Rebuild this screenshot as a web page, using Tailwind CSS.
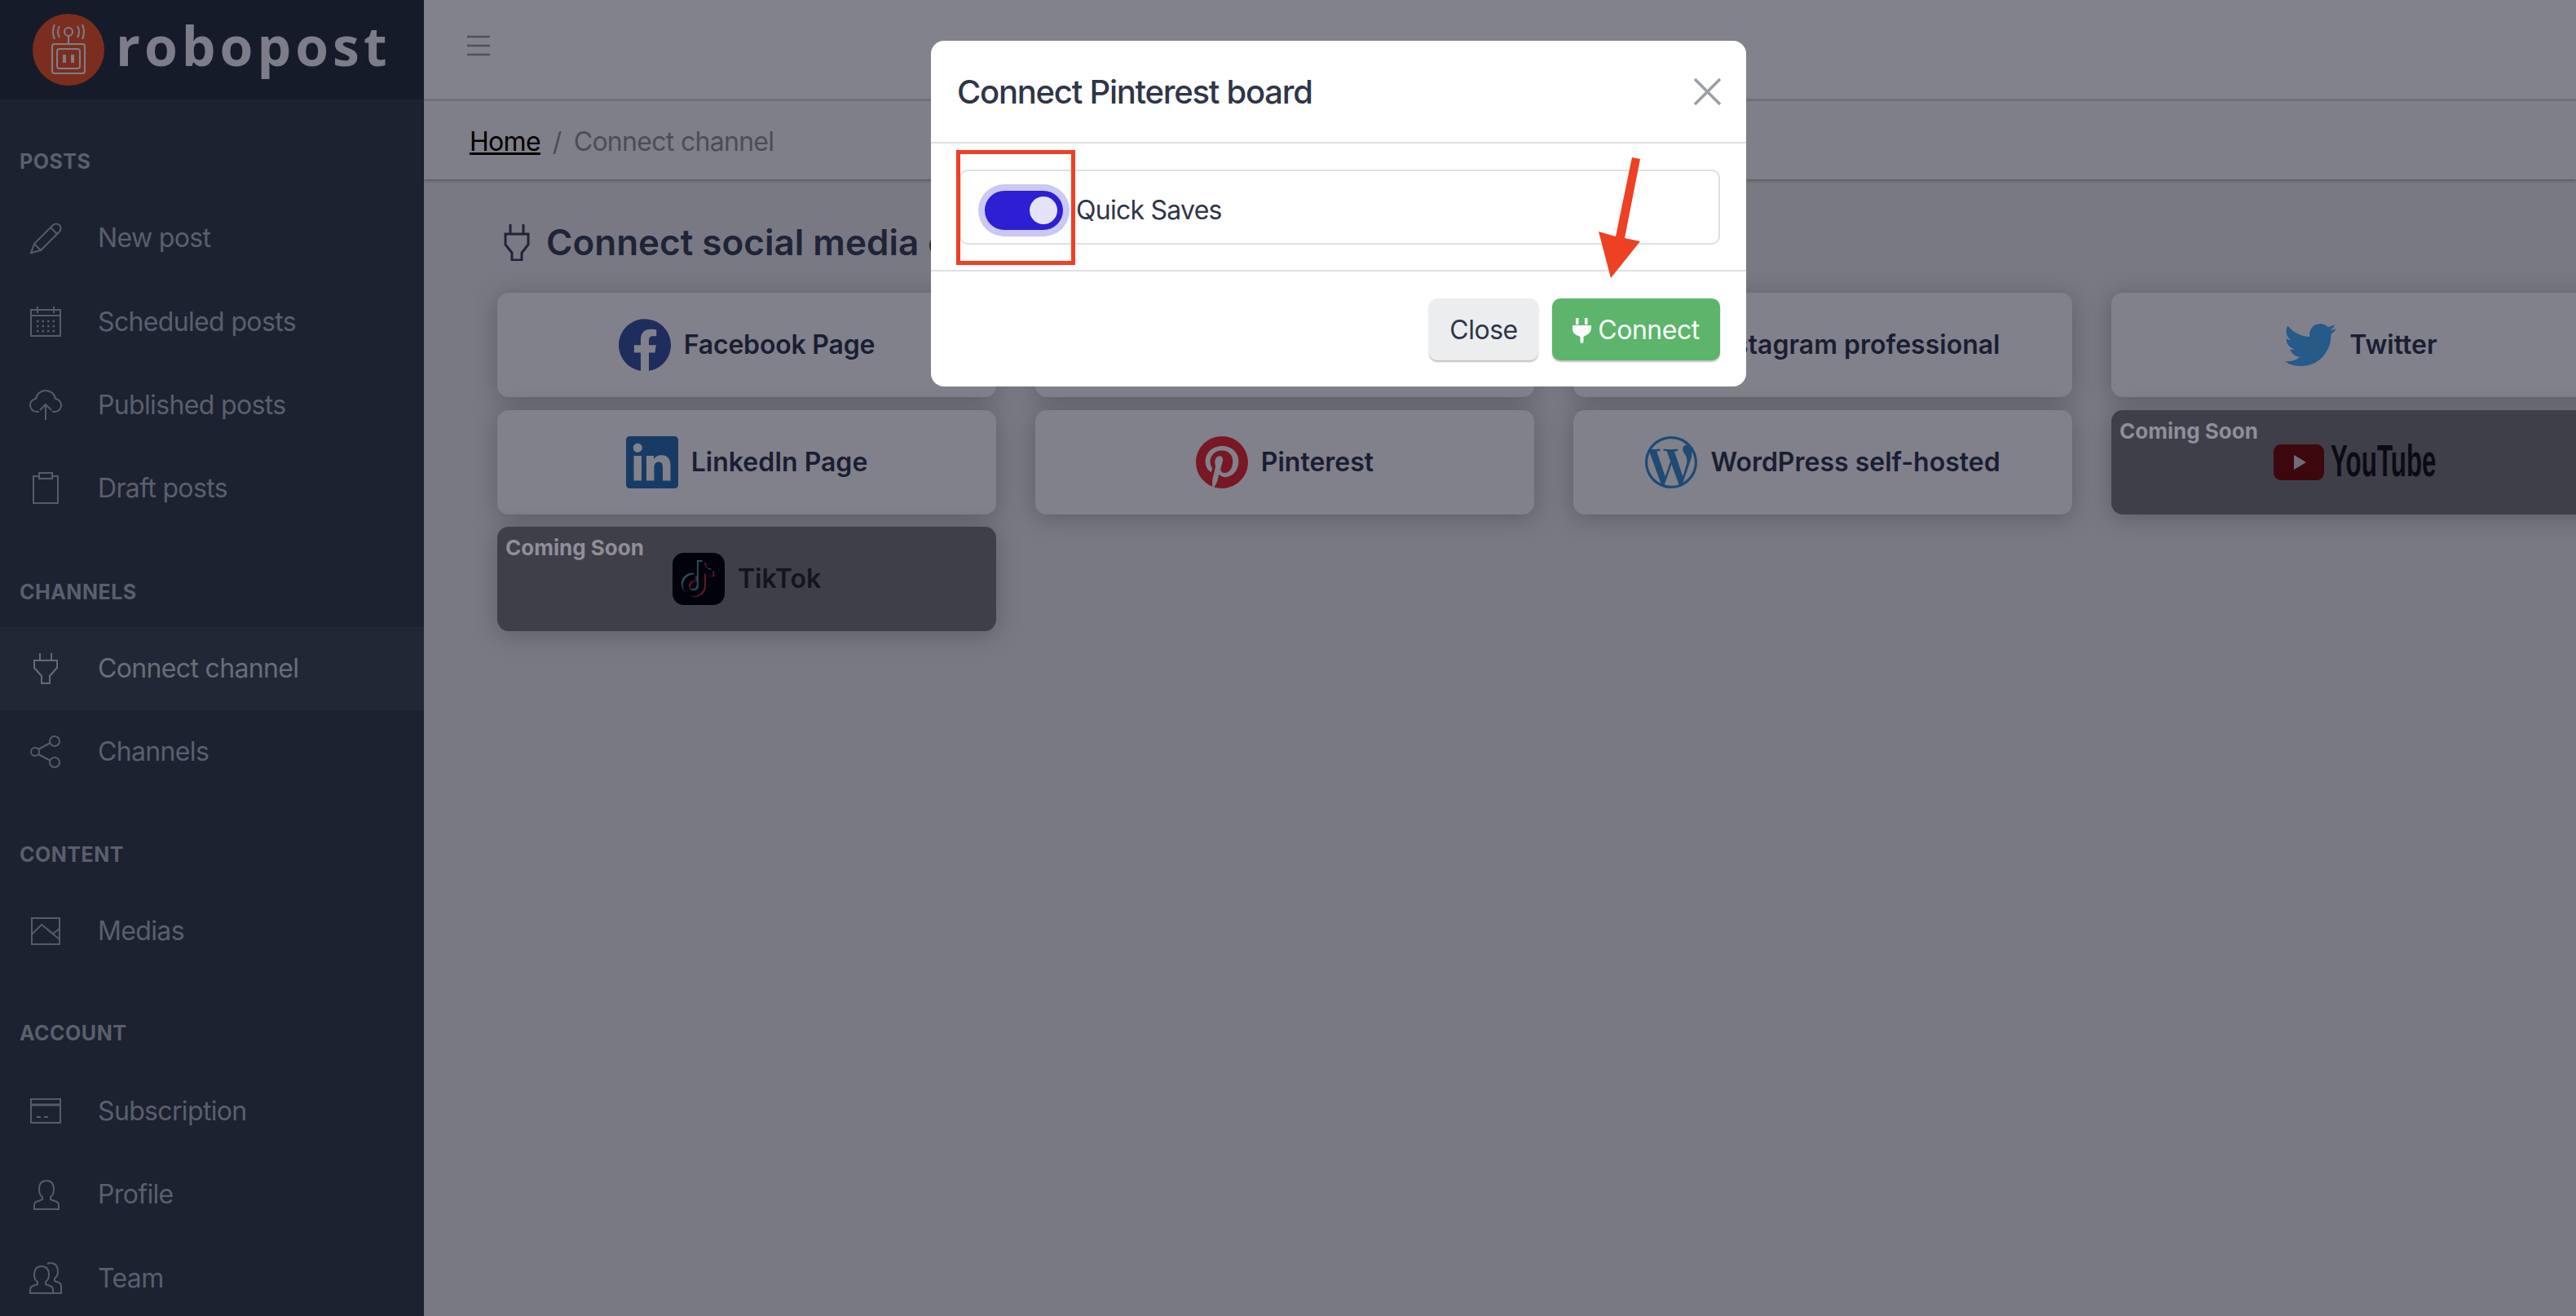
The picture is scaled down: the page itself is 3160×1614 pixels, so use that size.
<!DOCTYPE html>
<html lang="en">
<head>
<meta charset="utf-8">
<title>Connect channel</title>
<script src="https://cdn.jsdelivr.net/npm/@tailwindcss/browser@4"></script>
</head>
<body class="font-['Inter',sans-serif] w-[3160px] h-[1614px] overflow-hidden relative bg-[#797984]">
<div class="flex w-[3160px] h-[1614px] overflow-hidden">
  <!-- Sidebar -->
  <aside class="w-[520px] shrink-0 h-full bg-[#1c2230] text-[32px] tracking-[-0.65px] text-[#5b5f6c] overflow-hidden">
    <div class="h-[122px] bg-[#161b29] flex items-center pl-[40px]">
      <div class="w-[88px] h-[88px] rounded-full bg-[#7b2e1e] flex items-center justify-center">
        <svg width="44" height="64" viewBox="0 0 44 64" fill="none" stroke="#7d7e8a" stroke-width="2"><circle cx="22" cy="10" r="5"/><path d="M22 15v10M11 3q-4 7 0 14M5 1q-4 9 0 18M33 3q4 7 0 14M39 1q4 9 0 18"/><rect x="2" y="25" width="40" height="36" rx="3"/><rect x="8" y="31" width="28" height="24" rx="3"/><path d="M17 38v10M27 38v10" stroke-width="4"/></svg>
      </div>
      <span class="ml-[14px] mb-[12px] font-['Open_Sans',sans-serif] font-bold text-[66px] leading-none tracking-[5px] text-[#7c7d89]">robopost</span>
    </div>

    <div class="mt-[35px] h-[84px] flex items-center pl-[24px] text-[25px] font-bold uppercase tracking-[0.5px]">Posts</div>
    <a class="h-[102.4px] flex items-center"><span class="w-[112px] flex justify-center mr-[8px]"><svg width="40" height="40" viewBox="0 0 40 40" fill="none" stroke="#575b68" stroke-width="2"><path d="M2 38l4-11L29 4q4-3 8 0 3 4 0 8L14 35z"/><path d="M6 27l8 8M26 7l8 8"/></svg></span>New post</a>
    <a class="h-[102.4px] flex items-center"><span class="w-[112px] flex justify-center mr-[8px]"><svg width="40" height="40" viewBox="0 0 40 40" fill="none" stroke="#575b68" stroke-width="2"><rect x="2" y="5" width="36" height="32"/><path d="M10 1v8M30 1v8M2 12h36"/><path d="M9 19h22M9 25h22M9 31h22" stroke-width="2.5" stroke-dasharray="2.5 4"/></svg></span>Scheduled posts</a>
    <a class="h-[102.4px] flex items-center"><span class="w-[112px] flex justify-center mr-[8px]"><svg width="40" height="40" viewBox="0 0 40 40" fill="none" stroke="#575b68" stroke-width="2"><path d="M12 28H9C4 28 1 24 1 20s3-7 7-8C9 6 14 2 20 2s11 4 12 10c4 1 7 4 7 8s-3 8-8 8h-3"/><path d="M20 38V19M13 26l7-7 7 7"/></svg></span>Published posts</a>
    <a class="h-[102.4px] flex items-center"><span class="w-[112px] flex justify-center mr-[8px]"><svg width="40" height="40" viewBox="0 0 40 40" fill="none" stroke="#575b68" stroke-width="2"><path d="M12 5H5v33h30V5h-7"/><rect x="12" y="1" width="16" height="7"/></svg></span>Draft posts</a>

    <div class="mt-[34px] h-[84px] flex items-center pl-[24px] text-[25px] font-bold uppercase tracking-[0.5px]">Channels</div>
    <a class="h-[102.4px] flex items-center bg-[#222735] text-[#6a6d79]"><span class="w-[112px] flex justify-center mr-[8px]"><svg width="40" height="40" viewBox="0 0 40 40" fill="none" stroke="#666a76" stroke-width="2"><path d="M13 1v9M27 1v9M6 10h28v9l-9 10v9H15v-9L6 19z"/></svg></span>Connect channel</a>
    <a class="h-[102.4px] flex items-center"><span class="w-[112px] flex justify-center mr-[8px]"><svg width="40" height="40" viewBox="0 0 40 40" fill="none" stroke="#575b68" stroke-width="2"><circle cx="7" cy="20" r="5"/><circle cx="31" cy="7" r="6"/><circle cx="31" cy="33" r="6"/><path d="M11 17l15-8M11 23l15 8"/></svg></span>Channels</a>

    <div class="mt-[33px] h-[84px] flex items-center pl-[24px] text-[25px] font-bold uppercase tracking-[0.5px]">Content</div>
    <a class="h-[102.4px] flex items-center"><span class="w-[112px] flex justify-center mr-[8px]"><svg width="40" height="40" viewBox="0 0 40 40" fill="none" stroke="#575b68" stroke-width="2"><rect x="3" y="4" width="34" height="32"/><path d="M3 24l12-12 14 11 8-6M22 18l15 12"/></svg></span>Medias</a>

    <div class="mt-[33px] h-[84px] flex items-center pl-[24px] text-[25px] font-bold uppercase tracking-[0.5px]">Account</div>
    <a class="h-[102.4px] mt-[2px] flex items-center"><span class="w-[112px] flex justify-center mr-[8px]"><svg width="40" height="40" viewBox="0 0 40 40" fill="none" stroke="#575b68" stroke-width="2"><rect x="2" y="5" width="36" height="29"/><path d="M2 12h36" stroke-width="3"/><path d="M9 27h5M18 27h5"/></svg></span>Subscription</a>
    <a class="h-[102.4px] flex items-center"><span class="w-[112px] flex justify-center mr-[8px]"><svg width="40" height="40" viewBox="0 0 40 40" fill="none" stroke="#575b68" stroke-width="2"><path d="M6 38v-5q0-4 5-5l5-2v-3q-4-3-4-9 0-11 9-11t9 11q0 6-4 9v3l5 2q5 1 5 5v5z"/></svg></span>Profile</a>
    <a class="h-[102.4px] flex items-center"><span class="w-[112px] flex justify-center mr-[8px]"><svg width="40" height="40" viewBox="0 0 40 40" fill="none" stroke="#575b68" stroke-width="2"><path d="M1 38v-4q0-4 4-5l5-2v-3q-4-3-4-8 0-11 9-11t9 11q0 5-4 8v3l5 2q4 1 4 5v4z"/><path d="M22 2q2-1 4-1 9 0 9 11 0 5-4 8v3l5 2q3 1 3 5v8h-9"/></svg></span>Team</a>
  </aside>

  <!-- Main -->
  <main class="flex-1 min-w-0 h-full flex flex-col">
    <div class="h-[124px] shrink-0 bg-[#82828c] border-b-[3px] border-[#70707b] flex items-center pl-[52px] pb-[10px]">
      <svg width="30" height="26" viewBox="0 0 30 26" fill="none" stroke="#50505d" stroke-width="2.5"><path d="M1 2h28M1 13h28M1 24h28"/></svg>
    </div>
    <div class="h-[96px] shrink-0 bg-[#7f7f89] shadow-[0_2px_3px_rgba(0,0,0,0.25)] flex items-center pl-[56px] pt-[4px] text-[32px] tracking-[-0.7px] text-[#4c4c58] relative">
      <a class="text-black underline">Home</a><span class="mx-[15px]">/</span><span>Connect channel</span>
    </div>
    <div class="pl-[90px]">
      <h1 class="flex items-center h-[62px] mt-[46px] mb-[31px] ml-[8px] text-[44px] font-semibold text-[#1f2436] whitespace-nowrap">
        <svg class="mr-[20px]" width="32" height="46" viewBox="0 0 32 46" fill="none" stroke="#1f2436" stroke-width="3"><path d="M8 1v12M24 1v12M2 13h28v13l-8 10v9H10v-9L2 26z"/></svg>Connect social media channels
      </h1>
      <div class="grid grid-cols-[repeat(4,612px)] auto-rows-[128px] gap-x-[48px] gap-y-[15.5px] text-[32px] font-semibold text-[#1a1e31]">
        <div class="rounded-[14px] bg-[#81818b] shadow-[0_4px_30px_rgba(0,0,0,0.24)] flex items-center justify-center gap-[16px]">
          <svg width="64" height="64" viewBox="0 0 24 24" fill="#1f2d5c"><path d="M24 12.073c0-6.627-5.373-12-12-12s-12 5.373-12 12c0 5.99 4.388 10.954 10.125 11.854v-8.385H7.078v-3.47h3.047V9.43c0-3.007 1.792-4.669 4.533-4.669 1.312 0 2.686.235 2.686.235v2.953H15.83c-1.491 0-1.956.925-1.956 1.874v2.25h3.328l-.532 3.47h-2.796v8.385C19.612 23.027 24 18.062 24 12.073z"/></svg><span class="tracking-[-0.2px]">Facebook Page</span>
        </div>
        <div class="rounded-[14px] bg-[#81818b] shadow-[0_4px_30px_rgba(0,0,0,0.24)] flex items-center justify-center gap-[16px]">Facebook Group</div>
        <div class="rounded-[14px] bg-[#81818b] shadow-[0_4px_30px_rgba(0,0,0,0.24)] flex items-center justify-center gap-[16px]">
          <svg width="64" height="64" viewBox="0 0 24 24" fill="none" stroke="#5a2a4a" stroke-width="2"><rect x="2" y="2" width="20" height="20" rx="6"/><circle cx="12" cy="12" r="5"/></svg>Instagram professional
        </div>
        <div class="rounded-[14px] bg-[#81818b] shadow-[0_4px_30px_rgba(0,0,0,0.24)] flex items-center justify-center gap-[16px]">
          <svg width="64" height="64" viewBox="0 0 24 24" fill="#255a89"><path d="M23.953 4.57a10 10 0 01-2.825.775 4.958 4.958 0 002.163-2.723c-.951.555-2.005.959-3.127 1.184a4.92 4.92 0 00-8.384 4.482C7.69 8.095 4.067 6.13 1.64 3.162a4.822 4.822 0 00-.666 2.475c0 1.71.87 3.213 2.188 4.096a4.904 4.904 0 01-2.228-.616v.06a4.923 4.923 0 003.946 4.827 4.996 4.996 0 01-2.212.085 4.936 4.936 0 004.604 3.417 9.867 9.867 0 01-6.102 2.105c-.39 0-.779-.023-1.17-.067a13.995 13.995 0 007.557 2.209c9.053 0 13.998-7.496 13.998-13.985 0-.21 0-.42-.015-.63A9.935 9.935 0 0024 4.59z"/></svg>Twitter
        </div>

        <div class="rounded-[14px] bg-[#81818b] shadow-[0_4px_30px_rgba(0,0,0,0.24)] flex items-center justify-center gap-[16px]">
          <svg width="64" height="64" viewBox="0 0 24 24" fill="#173b64"><path d="M20.447 20.452h-3.554v-5.569c0-1.328-.027-3.037-1.852-3.037-1.853 0-2.136 1.445-2.136 2.939v5.667H9.351V9h3.414v1.561h.046c.477-.9 1.637-1.85 3.37-1.85 3.601 0 4.267 2.37 4.267 5.455v6.286zM5.337 7.433c-1.144 0-2.063-.926-2.063-2.065 0-1.138.92-2.063 2.063-2.063 1.14 0 2.064.925 2.064 2.063 0 1.139-.925 2.065-2.064 2.065zm1.782 13.019H3.555V9h3.564v11.452zM22.225 0H1.771C.792 0 0 .774 0 1.729v20.542C0 23.227.792 24 1.771 24h20.451C23.2 24 24 23.227 24 22.271V1.729C24 .774 23.2 0 22.222 0h.003z"/></svg>LinkedIn Page
        </div>
        <div class="rounded-[14px] bg-[#81818b] shadow-[0_4px_30px_rgba(0,0,0,0.24)] flex items-center justify-center gap-[16px]">
          <svg width="64" height="64" viewBox="0 0 24 24" fill="#771824"><path d="M12.017 0C5.396 0 .029 5.367.029 11.987c0 5.079 3.158 9.417 7.618 11.162-.105-.949-.199-2.403.041-3.439.219-.937 1.406-5.957 1.406-5.957s-.359-.72-.359-1.781c0-1.663.967-2.911 2.168-2.911 1.024 0 1.518.769 1.518 1.688 0 1.029-.653 2.567-.992 3.992-.285 1.193.6 2.165 1.775 2.165 2.128 0 3.768-2.245 3.768-5.487 0-2.861-2.063-4.869-5.008-4.869-3.41 0-5.409 2.562-5.409 5.199 0 1.033.394 2.143.889 2.741.099.12.112.225.085.345-.09.375-.293 1.199-.334 1.363-.053.225-.172.271-.401.165-1.495-.69-2.433-2.878-2.433-4.646 0-3.776 2.748-7.252 7.92-7.252 4.158 0 7.392 2.967 7.392 6.923 0 4.135-2.607 7.462-6.233 7.462-1.214 0-2.354-.629-2.758-1.379l-.749 2.848c-.269 1.045-1.004 2.352-1.498 3.146 1.123.345 2.306.535 3.55.535 6.607 0 11.985-5.365 11.985-11.987C23.97 5.39 18.592.026 11.985.026L12.017 0z"/></svg>Pinterest
        </div>
        <div class="rounded-[14px] bg-[#81818b] shadow-[0_4px_30px_rgba(0,0,0,0.24)] flex items-center justify-center gap-[16px]">
          <svg width="64" height="64" viewBox="0 0 24 24" fill="#1f4a73"><path d="M21.469 6.825c.84 1.537 1.318 3.3 1.318 5.175 0 3.979-2.156 7.456-5.363 9.325l3.295-9.527c.615-1.54.82-2.771.82-3.864 0-.405-.026-.78-.07-1.11m-7.981.105c.647-.03 1.232-.105 1.232-.105.582-.075.514-.93-.067-.899 0 0-1.755.135-2.88.135-1.064 0-2.85-.15-2.85-.15-.585-.03-.661.855-.075.885 0 0 .54.061 1.125.09l1.68 4.605-2.37 7.08L5.354 6.9c.649-.03 1.234-.1 1.234-.1.585-.075.516-.93-.065-.896 0 0-1.746.138-2.874.138-.2 0-.438-.008-.69-.015C4.911 3.15 8.235 1.215 12 1.215c2.809 0 5.365 1.072 7.286 2.833-.046-.003-.091-.009-.141-.009-1.06 0-1.812.923-1.812 1.914 0 .89.513 1.643 1.06 2.531.411.72.89 1.643.89 2.977 0 .915-.354 1.994-.821 3.479l-1.075 3.585-3.9-11.61.001.014zM12 22.784c-1.059 0-2.081-.153-3.048-.437l3.237-9.406 3.315 9.087c.024.053.05.101.078.149-1.12.393-2.325.609-3.582.609M1.211 12c0-1.564.336-3.05.935-4.39L7.29 21.709C3.694 19.96 1.212 16.271 1.211 12M12 0C5.385 0 0 5.385 0 12s5.385 12 12 12 12-5.385 12-12S18.615 0 12 0"/></svg>WordPress self-hosted
        </div>
        <div class="relative rounded-[14px] bg-[#3f3f49] shadow-[0_4px_30px_rgba(0,0,0,0.24)] flex items-center justify-center pr-[14px]">
          <span class="absolute left-[10px] top-[6px] text-[26px] font-bold text-[#8f8f99]">Coming Soon</span>
          <svg width="62" height="44" viewBox="0 0 62 44"><rect x="0" y="0" width="62" height="44" rx="9" fill="#3c080e"/><path d="M25 13l15 9-15 9z" fill="#6e6e78"/></svg>
          <span class="ml-[8px] w-[130px] block"><span class="inline-block origin-left scale-x-[0.56] whitespace-nowrap font-['Liberation_Sans',sans-serif] font-bold text-[56px] leading-none text-[#0b0b14]">YouTube</span></span>
        </div>

        <div class="relative rounded-[14px] bg-[#3f3f49] shadow-[0_4px_30px_rgba(0,0,0,0.24)] flex items-center justify-center gap-[16px] text-[#14141f]">
          <span class="absolute left-[10px] top-[6px] text-[26px] font-bold text-[#8f8f99]">Coming Soon</span>
          <span class="w-[64px] h-[64px] rounded-[14px] bg-[#02020c] relative">
            <svg class="absolute left-[12px] top-[10px]" width="42" height="46" viewBox="0 0 24 24" fill="#5c1a2a"><path d="M12.525.02c1.31-.02 2.61-.01 3.91-.02.08 1.53.63 3.09 1.75 4.17 1.12 1.11 2.7 1.62 4.24 1.79v4.03c-1.44-.05-2.89-.35-4.2-.97-.57-.26-1.1-.59-1.62-.93-.01 2.92.01 5.84-.02 8.75-.08 1.4-.54 2.79-1.35 3.94-1.31 1.92-3.58 3.17-5.91 3.21-1.43.08-2.86-.31-4.08-1.03-2.02-1.19-3.44-3.37-3.65-5.71-.02-.5-.03-1-.01-1.49.18-1.9 1.12-3.72 2.58-4.96 1.66-1.44 3.98-2.13 6.15-1.72.02 1.48-.04 2.96-.04 4.44-.99-.32-2.15-.23-3.02.37-.63.41-1.11 1.04-1.36 1.75-.21.51-.15 1.07-.14 1.61.24 1.64 1.82 3.02 3.5 2.87 1.12-.01 2.19-.66 2.77-1.61.19-.33.4-.67.41-1.06.1-1.79.06-3.57.07-5.36.01-4.03-.01-8.05.02-12.07z"/></svg>
            <svg class="absolute left-[8px] top-[7px]" width="42" height="46" viewBox="0 0 24 24" fill="#1d5058"><path d="M12.525.02c1.31-.02 2.61-.01 3.91-.02.08 1.53.63 3.09 1.75 4.17 1.12 1.11 2.7 1.62 4.24 1.79v4.03c-1.44-.05-2.89-.35-4.2-.97-.57-.26-1.1-.59-1.62-.93-.01 2.92.01 5.84-.02 8.75-.08 1.4-.54 2.79-1.35 3.94-1.31 1.92-3.58 3.17-5.91 3.21-1.43.08-2.86-.31-4.08-1.03-2.02-1.19-3.44-3.37-3.65-5.71-.02-.5-.03-1-.01-1.49.18-1.9 1.12-3.72 2.58-4.96 1.66-1.44 3.98-2.13 6.15-1.72.02 1.48-.04 2.96-.04 4.44-.99-.32-2.15-.23-3.02.37-.63.41-1.11 1.04-1.36 1.75-.21.51-.15 1.07-.14 1.61.24 1.64 1.82 3.02 3.5 2.87 1.12-.01 2.19-.66 2.77-1.61.19-.33.4-.67.41-1.06.1-1.79.06-3.57.07-5.36.01-4.03-.01-8.05.02-12.07z"/></svg>
            <svg class="absolute left-[10px] top-[8.5px]" width="42" height="46" viewBox="0 0 24 24" fill="#02020c"><path d="M12.525.02c1.31-.02 2.61-.01 3.91-.02.08 1.53.63 3.09 1.75 4.17 1.12 1.11 2.7 1.62 4.24 1.79v4.03c-1.44-.05-2.89-.35-4.2-.97-.57-.26-1.1-.59-1.62-.93-.01 2.92.01 5.84-.02 8.75-.08 1.4-.54 2.79-1.35 3.94-1.31 1.92-3.58 3.17-5.91 3.21-1.43.08-2.86-.31-4.08-1.03-2.02-1.19-3.44-3.37-3.65-5.71-.02-.5-.03-1-.01-1.49.18-1.9 1.12-3.72 2.58-4.96 1.66-1.44 3.98-2.13 6.15-1.72.02 1.48-.04 2.96-.04 4.44-.99-.32-2.15-.23-3.02.37-.63.41-1.11 1.04-1.36 1.75-.21.51-.15 1.07-.14 1.61.24 1.64 1.82 3.02 3.5 2.87 1.12-.01 2.19-.66 2.77-1.61.19-.33.4-.67.41-1.06.1-1.79.06-3.57.07-5.36.01-4.03-.01-8.05.02-12.07z"/></svg>
          </span>TikTok
        </div>
      </div>
    </div>
  </main>
</div>

<!-- Modal -->
<div class="absolute left-[1142px] top-[50px] w-[1000px] h-[424px] bg-white rounded-[16px] flex flex-col text-[#2f3648]">
  <div class="h-[126px] shrink-0 border-b-2 border-[#dfe0e2] flex items-center justify-between pl-[32px] pr-[31px]">
    <h2 class="text-[40px] font-medium tracking-[-1.25px] pt-[2px]">Connect Pinterest board</h2>
    <svg width="33" height="33" viewBox="0 0 33 33" fill="none" stroke="#9a9ea6" stroke-width="3.5"><path d="M1 1l31 31M32 1L1 32"/></svg>
  </div>
  <div class="h-[157px] shrink-0 border-b-2 border-[#dfe0e2] pt-[32px] pl-[35px] pr-[32px]">
    <div class="h-[92px] border-2 border-[#dfe0e2] rounded-[10px] flex items-center pl-[29px] pt-[8px] text-[32px] tracking-[-0.75px]">
      <span class="w-[96px] h-[48px] rounded-full bg-[#2c20d2] shadow-[0_0_0_8px_#cbc8f4] flex items-center justify-end pr-[7px]"><span class="w-[34px] h-[34px] rounded-full bg-[#e4e3f8]"></span></span>
      <span class="ml-[16px]">Quick Saves</span>
    </div>
  </div>
  <div class="flex-1 flex justify-end items-start pt-[33px] pr-[32px] gap-[17px] text-[32px] tracking-[-0.5px]">
    <button class="w-[134px] h-[76px] rounded-[10px] bg-[#ecedef] shadow-[0_2px_2px_rgba(0,0,0,0.25)] pt-[2px]">Close</button>
    <button class="w-[206px] h-[76px] rounded-[10px] bg-[#5cb56a] text-white shadow-[0_2px_2px_rgba(0,0,0,0.25)] flex items-center justify-center gap-[8px] pt-[2px]">
      <svg width="23" height="31" viewBox="0 0 23 31" fill="#fff"><path d="M4 0h3.500v8H4zM15 0h3.500v8H15zM0 9h23v4q-1 6-6 8l-3.500 2v6q0 2-2 2t-2-2v-6L5 21q-5-2-5-8z"/></svg>Connect
    </button>
  </div>
</div>

<!-- Annotations -->
<svg class="absolute left-0 top-0 pointer-events-none" width="3160" height="1614" viewBox="0 0 3160 1614" fill="none">
  <rect x="1175.5" y="186.500" width="141" height="136" stroke="#ee4023" stroke-width="5"/>
  <polygon points="2002,193 2012,195 1993,292 2012,296 1976,341 1961,284 1982,290" fill="#ee4023"/>
</svg>
</body>
</html>
